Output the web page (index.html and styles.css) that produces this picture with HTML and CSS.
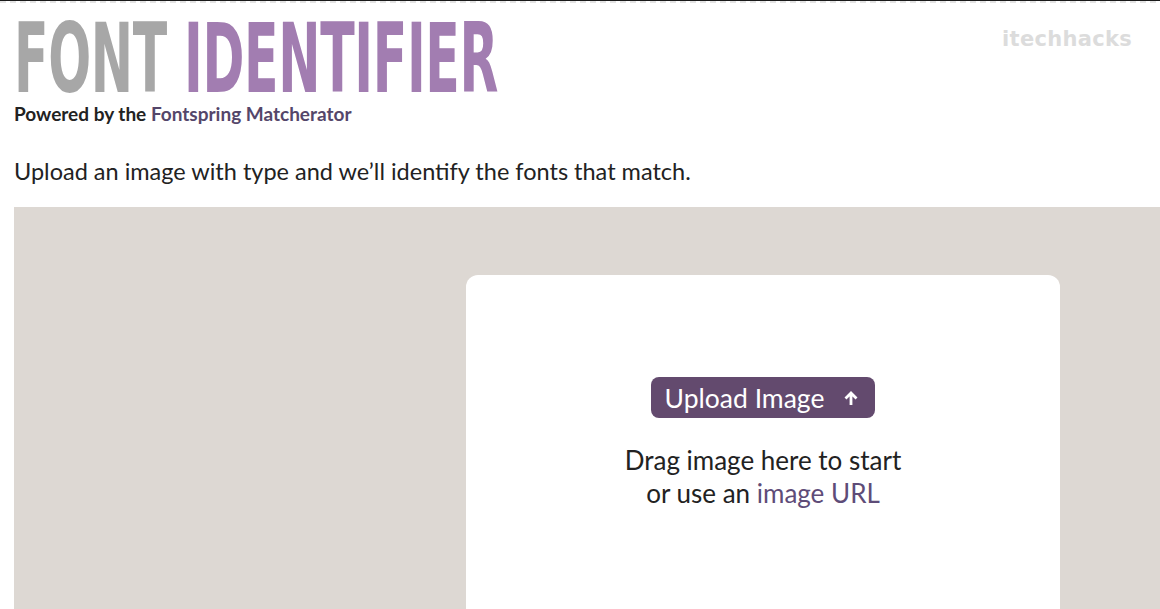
FILE: index.html
```html
<!DOCTYPE html>
<html lang="en">
<head>
<meta charset="utf-8">
<title>Font Identifier</title>
<link rel="stylesheet" href="styles.css">
</head>
<body>
<div class="topline"></div>
<header class="head">
  <div class="brand">
    <h1 class="title"><span class="title-inner"><span class="t-gray">FONT</span> <span class="t-purple">IDENTIFIER</span></span></h1>
    <p class="powered">Powered by the <a class="link" href="#">Fontspring Matcherator</a></p>
  </div>
  <div class="watermark">itechhacks</div>
</header>
<p class="intro">Upload an image with type and we’ll identify the fonts that match.</p>
<section class="stage">
  <div class="card">
    <button class="upload" type="button">Upload Image
      <svg class="arrow" width="16" height="16" viewBox="0 0 16 16" aria-hidden="true"><path d="M8 15V3M2.5 8.5L8 3l5.5 5.5" fill="none" stroke="#fff" stroke-width="2.8"/></svg>
    </button>
    <p class="drag">Drag image here to start<br>or use an <a class="link-light" href="#">image URL</a></p>
  </div>
</section>
</body>
</html>
```
FILE: styles.css
```css
html, body {
  margin: 0;
  padding: 0;
  background: #fff;
  overflow: hidden;
}
body {
  width: 1160px;
  height: 609px;
  font-family: "Lato", "Source Sans Pro", sans-serif;
  color: #222;
}
.topline {
  height: 2px;
  border-top: 1px solid #1a1a1a;
  background: repeating-linear-gradient(90deg, #e4e4e4 0 6px, #fff 6px 10px);
}
.head {
  display: flex;
  justify-content: space-between;
  padding: 0 28px 0 14px;
}
.title {
  margin: 15px 0 0 0;
  height: 82px;
  font-family: "DejaVu Sans Condensed", "Liberation Sans Narrow", sans-serif;
  font-weight: bold;
  font-size: 96px;
  line-height: 82px;
  white-space: nowrap;
}
.title-inner {
  display: inline-block;
  transform: scaleX(0.585);
  transform-origin: left center;
  letter-spacing: -0.6px;
}
.t-gray { color: #a7a7a7; }
.t-purple { color: #a27db1; }
.powered {
  margin: 2px 0 0 0;
  font-size: 19px;
  line-height: 24px;
  font-weight: bold;
  color: #222;
}
.link {
  color: #54466a;
  text-decoration: none;
}
.watermark {
  margin-top: 24px;
  font-family: "DejaVu Sans", sans-serif;
  font-weight: bold;
  font-size: 21px;
  color: #dcdcdc;
  letter-spacing: 0.3px;
}
.intro {
  margin: 30px 0 0 14px;
  font-size: 23.5px;
  line-height: 30px;
  color: #222;
}
.stage {
  margin: 21px 0 0 14px;
  height: 402px;
  background: #ddd8d3;
  padding: 68px 0 0 452px;
  box-sizing: border-box;
  overflow: hidden;
}
.card {
  width: 594px;
  height: 400px;
  background: #fff;
  border-radius: 12px;
  display: flex;
  flex-direction: column;
  align-items: center;
  padding-top: 102px;
  box-sizing: border-box;
}
.upload {
  display: flex;
  align-items: center;
  gap: 19px;
  height: 41px;
  padding: 0 16px 0 14px;
  border: none;
  border-radius: 8px;
  background: #634a6e;
  color: #fff;
  font-family: "Lato", sans-serif;
  font-size: 26.5px;
  cursor: pointer;
}
.arrow { display: block; }
.drag {
  margin: 26px 0 0 0;
  text-align: center;
  font-size: 26px;
  line-height: 33px;
  color: #222;
}
.link-light {
  color: #5e4c78;
  text-decoration: none;
}
```
